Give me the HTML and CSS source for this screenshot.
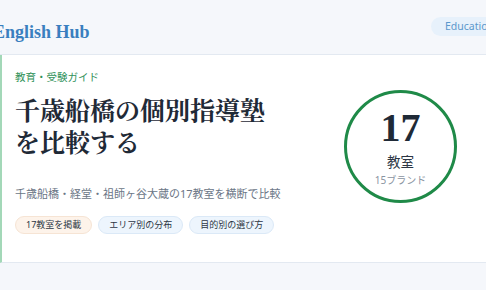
FILE: index.html
```html
<!DOCTYPE html>
<html lang="ja">

<head>
    <meta charset="UTF-8">
    <meta name="viewport" content="width=device-width, initial-scale=1.0">
    <title>English Hub - 千歳船橋の個別指導塾を比較する</title>
    <link rel="stylesheet" href="styles.css">
</head>

<body>
    <header class="site-header">
        <a class="brand" href="#">English Hub</a>
        <span class="site-tag">Education</span>
    </header>

    <section class="hero-card">
        <div class="hero-main">
            <p class="hero-kicker">教育・受験ガイド</p>
            <h1 class="hero-title">千歳船橋の個別指導塾<br>を比較する</h1>
            <p class="hero-lead">千歳船橋・経堂・祖師ヶ谷大蔵の17教室を横断で比較</p>
            <ul class="hero-chips">
                <li class="chip chip-warm">17教室を掲載</li>
                <li class="chip">エリア別の分布</li>
                <li class="chip">目的別の選び方</li>
            </ul>
        </div>

        <div class="hero-stat">
            <span class="stat-num">17</span>
            <span class="stat-unit">教室</span>
            <span class="stat-sub">15ブランド</span>
        </div>
    </section>
</body>

</html>
```

FILE: styles.css
```css
* {
    margin: 0;
    padding: 0;
    box-sizing: border-box;
}

body {
    background: #f5f7fb;
    font-family: "Noto Sans", "Noto Sans CJK JP", sans-serif;
    color: #1f2a37;
    overflow: hidden;
}

/* header */
.site-header {
    display: flex;
    justify-content: space-between;
    align-items: flex-start;
    height: 55px;
    border-bottom: 1px solid #e3e9f1;
}

.site-header>.brand {
    margin: 22px 0 0 -7px;
    font-family: "Liberation Serif", "Noto Sans CJK JP", serif;
    font-weight: bold;
    font-size: 18px;
    line-height: 20px;
    color: #3a7fbf;
    text-decoration: none;
}

.site-header>.site-tag {
    margin: 17px -22px 0 0;
    padding: 0 14px;
    height: 19px;
    line-height: 19px;
    border-radius: 10px;
    background: #e7f1fb;
    color: #5b98cc;
    font-size: 10.5px;
}

/* hero card */
.hero-card {
    display: flex;
    justify-content: space-between;
    align-items: flex-start;
    height: 208px;
    background: #fff;
    border-left: 2px solid #a3d8b8;
    border-bottom: 1px solid #e3e9f1;
}

.hero-main {
    padding: 15px 0 0 13px;
}

.hero-kicker {
    font-size: 10.5px;
    line-height: 15px;
    color: #2f9159;
}

.hero-title {
    margin-top: 8px;
    font-family: "Noto Serif CJK JP", "Noto Sans CJK JP", serif;
    font-weight: bold;
    font-size: 25px;
    line-height: 32px;
    color: #1f2a37;
}

.hero-lead {
    margin-top: 29px;
    font-size: 11px;
    line-height: 16px;
    color: #6b7686;
}

.hero-chips {
    display: flex;
    gap: 6px;
    margin-top: 14px;
    list-style: none;
}

.chip {
    padding: 0 10px;
    height: 18px;
    line-height: 16px;
    border: 1px solid #dbe9f7;
    border-radius: 9px;
    background: #edf5fd;
    font-size: 9px;
    color: #2c3644;
}

.chip-warm {
    border-color: #f6e4d4;
    background: #fdf3ea;
}

/* stat circle */
.hero-stat {
    display: flex;
    flex-direction: column;
    align-items: center;
    width: 113px;
    height: 113px;
    margin: 35px 29px 0 0;
    padding-top: 15px;
    border: 3px solid #1f8a48;
    border-radius: 50%;
}

.stat-num {
    font-family: "Liberation Serif", serif;
    font-weight: bold;
    font-size: 40px;
    line-height: 40px;
    color: #1f2a37;
}

.stat-unit {
    margin-top: 5px;
    font-size: 13.5px;
    line-height: 18px;
    color: #2c3644;
}

.stat-sub {
    margin-top: 3px;
    font-size: 10px;
    line-height: 13px;
    color: #8a93a1;
}
```
